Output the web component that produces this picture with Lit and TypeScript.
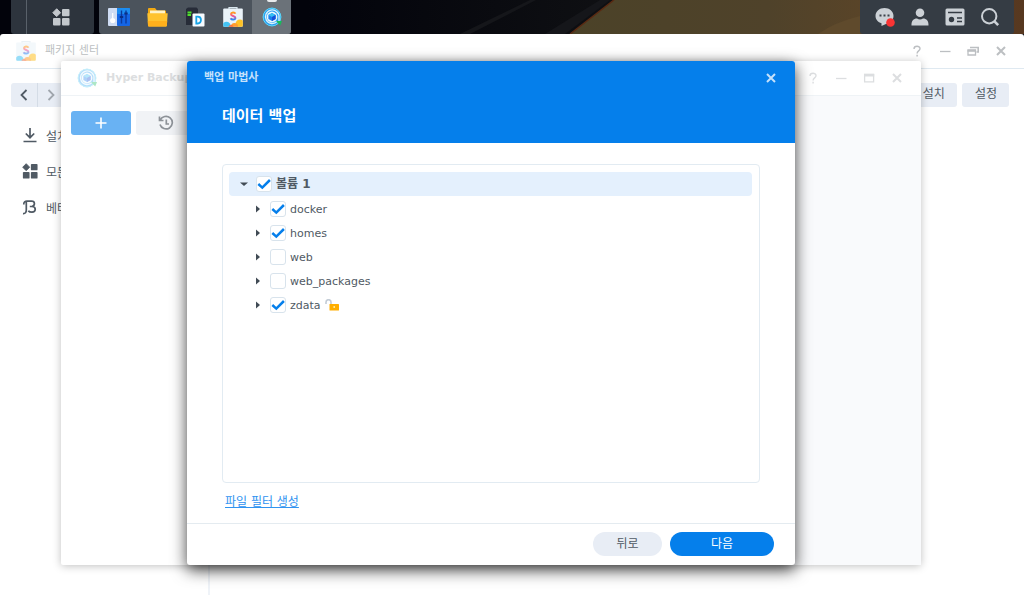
import { LitElement, html, css, svg, nothing } from "lit";
import { customElement, property, state } from "lit/decorators.js";

const backupLogo = (size: number) => html`
  <svg width=${size} height=${size} viewBox="0 0 20 20" aria-hidden="true">
    <defs>
      <linearGradient id="ring" x1="0" y1="0" x2="1" y2="1">
        <stop offset="0" stop-color="#2fc4f5" />
        <stop offset=".55" stop-color="#1f8df0" />
        <stop offset="1" stop-color="#14c46c" />
      </linearGradient>
    </defs>
    <circle cx="10" cy="10" r="9.2" fill="#2a9cf2" />
    <circle cx="10" cy="10" r="8.9" fill="none" stroke="#5fd8f5" stroke-width="1" />
    <path d="M15.300 14.300A6.800 6.800 0 1 1 17 10.500v4" fill="none" stroke="#d9f4fd" stroke-width="1.300" />
    <path d="M14 14h6l-1.800 4.500z" fill="#17bb5c" />
    <circle cx="10" cy="10" r="5.400" fill="#e9f8fe" />
    <path d="M10 6l3.600 2v4.100L10 14.100l-3.600-2V8z" fill="#1b7ff0" />
    <path d="M10 6l3.600 2L10 10 6.400 8z" fill="#36c0f2" />
    <path d="M10 10l3.600-2v4.100l-3.600 2z" fill="#1550d8" />
  </svg>
`;

const storeLogo = (size: number) => html`
  <svg width=${size} height=${size} viewBox="0 0 20 20" aria-hidden="true">
    <defs>
      <linearGradient id="ess" x1="0" y1="0" x2="0" y2="1">
        <stop offset="0" stop-color="#ffa01c" />
        <stop offset=".5" stop-color="#f5509b" />
        <stop offset="1" stop-color="#2a8df5" />
      </linearGradient>
      <clipPath id="bag"><rect x=".2" y="1.500" width="19.600" height="18.300" rx="1" /></clipPath>
    </defs>
    <path d="M6 2V.6h8V2" fill="none" stroke="#d9e6ee" stroke-width="1.200" />
    <g clip-path="url(#bag)">
      <rect width="20" height="20" fill="#eaf3f9" />
      <circle cx="17" cy="17" r="4.500" fill="#ffc225" />
      <circle cx="11.500" cy="19.500" r="3.600" fill="#ff9d2e" />
      <circle cx="3.500" cy="19" r="4.200" fill="#43c3f3" />
      <circle cx="8" cy="20.500" r="2.600" fill="#f9693c" />
    </g>
    <path d="M12.300 6.700C11.800 5 8.200 4.900 8 7.100c-.2 2.300 4.500 1.400 4.400 3.900-.2 2.100-3.900 2.100-4.800.3" fill="none"
      stroke="url(#ess)" stroke-width="2" />
  </svg>
`;

const tiles = (size: number) => html`
  <svg width=${size} height=${size} viewBox="0 0 18 18" fill="currentColor" aria-hidden="true">
    <path d="M4.700.8L8.600 4.700 4.700 8.600.8 4.700z" stroke="currentColor" stroke-width="1" stroke-linejoin="round" />
    <rect x="10" y="1" width="7.500" height="7.200" rx="1" />
    <rect x="1" y="10" width="7.500" height="7.500" rx="1" />
    <rect x="10" y="10" width="7.500" height="7.500" rx="1" />
  </svg>
`;

const windowGlyphs: Record<string, unknown> = {
  help: svg`<path d="M3 3.900C3.100.400 9 .500 9 3.700c0 2.100-2.900 2.300-2.900 4.700M6.100 9.800v1.700" stroke-width="1.400" />`,
  minimize: svg`<path d="M1 6.500h10.500" stroke-width="1.300" />`,
  maximize: svg`<path d="M1.600 2.500h9v7.400h-9z" stroke-width="1.300" /><path d="M1 3.200h10.200" stroke-width="2.600" />`,
  restore: svg`<path d="M1 5h7.500v5H1z" stroke-width="1.300" /><path d="M.5 5.800H9" stroke-width="2" /><path d="M3 2.500h8.200v4.500H9.500" stroke-width="1.600" />`,
  close: svg`<path d="M2 2l8 8M10 2l-8 8" stroke-width="2" />`,
};

@customElement("window-tools")
export class WindowTools extends LitElement {
  static styles = css`
    :host { display: flex; gap: 16px; }
    button {
      width: 12px; height: 12px; padding: 0; border: 0;
      background: none; color: inherit; display: grid;
    }
    svg { width: 12px; height: 12px; fill: none; stroke: currentColor; }
  `;
  @property({ attribute: false }) names: string[] = [];
  render() {
    return this.names.map(
      (n) => html`<button aria-label=${n}><svg viewBox="0 0 12 12">${windowGlyphs[n]}</svg></button>`
    );
  }
}

interface Folder { name: string; checked: boolean; unlocked?: boolean }

@customElement("folder-tree")
export class FolderTree extends LitElement {
  static styles = css`
    :host {
      display: block; box-sizing: border-box; padding: 7px 7px 7px 6px;
      border: 1px solid #e2ebf2; border-radius: 4px; overflow: auto;
    }
    ul { list-style: none; margin: 0; padding: 0; }
    .children { padding-top: 1px; }
    .row {
      display: flex; align-items: center; height: 24px; padding-left: 10px;
      border-radius: 4px; font-size: 11px; color: #505a64;
    }
    .children .row { padding-left: 24px; }
    .root { background: #e4f0fd; font-size: 12px; font-weight: bold; }
    .root label { line-height: 18px; padding-bottom: 1px; }
    .toggle {
      width: 10px; height: 10px; padding: 0; border: 0; margin-right: 7px;
      background: none; color: #414b55; display: grid;
    }
    .toggle svg { width: 10px; height: 10px; }
    input {
      appearance: none; width: 16px; height: 16px; margin: 0 4px 0 0; box-sizing: border-box;
      border: 1px solid #d8e3ec; border-radius: 3px; background: #fff center / 14px no-repeat;
    }
    input:checked {
      background-image: url("data:image/svg+xml,%3Csvg xmlns='http://www.w3.org/2000/svg' viewBox='0 0 14 14'%3E%3Cpath d='M1.300 7l4 3.600L12.900 3' fill='none' stroke='%23057feb' stroke-width='2.500'/%3E%3C/svg%3E");
    }
    .lock { width: 14px; height: 12px; margin-left: 4px; }
  `;
  @state() private folders: Folder[] = [
    { name: "docker", checked: true },
    { name: "homes", checked: true },
    { name: "web", checked: false },
    { name: "web_packages", checked: false },
    { name: "zdata", checked: true, unlocked: true },
  ];
  render() {
    return html`
      <ul>
        <li>
          <div class="row root">
            <button class="toggle" aria-label="접기">
              <svg viewBox="0 0 10 10"><path d="M1 3.500h8L5 7z" fill="currentColor" /></svg>
            </button>
            <input type="checkbox" id="volume" checked /><label for="volume">볼륨 1</label>
          </div>
          <ul class="children">
            ${this.folders.map(
              (f) => html`<li class="row">
                <button class="toggle" aria-label="펼치기">
                  <svg viewBox="0 0 10 10"><path d="M3 1.500v7L7 5z" fill="currentColor" /></svg>
                </button>
                <input type="checkbox" id=${f.name} .checked=${f.checked} />
                <label for=${f.name}>${f.name}</label>
                ${f.unlocked
                  ? html`<svg class="lock" viewBox="0 0 14 12" aria-hidden="true">
                      <path d="M1 5V3.200a2.500 2.500 0 0 1 5 0V6" fill="none" stroke="#c3ccd6" stroke-width="1.600" />
                      <rect x="4.500" y="5" width="9.500" height="6.500" rx=".6" fill="#ffae00" />
                      <circle cx="9.200" cy="8" r=".9" fill="#fff0b0" />
                    </svg>`
                  : nothing}
              </li>`
            )}
          </ul>
        </li>
      </ul>
    `;
  }
}

@customElement("backup-wizard")
export class BackupWizard extends LitElement {
  static styles = css`
    :host {
      display: flex; flex-direction: column; background: #fff;
      border-radius: 3px; box-shadow: 0 5px 16px rgba(0, 0, 0, 0.75);
    }
    header {
      box-sizing: border-box; height: 82px; padding: 0 18px 0 17px; background: #057feb;
      border-radius: 3px 3px 0 0; color: #fff;
    }
    .bar {
      display: flex; align-items: center; justify-content: space-between;
      height: 34px; color: #c5e1fb; font-size: 11px;
    }
    h2 { font-size: 11px; line-height: 18px; margin: 0; }
    h1 { font-size: 15px; line-height: 20px; margin: 11px 18px 0; }
    main { flex: 1; display: flex; flex-direction: column; padding: 21px 35px 11px; min-height: 0; }
    folder-tree { flex: 1; }
    a { align-self: flex-start; margin: 9px 3px 0; color: #2f93f0; font-size: 12px; line-height: 20px; }
    footer {
      display: flex; align-items: center; justify-content: flex-end; gap: 8px;
      height: 39px; padding: 0 21px 2px; border-top: 1px solid #e4ebf0;
    }
    footer button {
      height: 24px; padding: 0; border: 0; border-radius: 12px; font: inherit; font-size: 12px;
      line-height: 18px;
      min-width: 69px; background: #e8edf5; color: #505a64;
    }
    footer .primary { min-width: 104px; background: #057feb; color: #fff; }
  `;
  render() {
    return html`
      <header>
        <div class="bar"><h2>백업 마법사</h2><window-tools .names=${["close"]}></window-tools></div>
        <h1>데이터 백업</h1>
      </header>
      <main>
        <folder-tree></folder-tree>
        <a href="#">파일 필터 생성</a>
      </main>
      <footer><button>뒤로</button><button class="primary">다음</button></footer>
    `;
  }
}

@customElement("task-bar")
export class TaskBar extends LitElement {
  static styles = css`
    :host { position: relative; display: flex; height: 34px; background: #02030b; }
    .wallpaper { position: absolute; inset: 0; width: 100%; height: 100%; }
    nav { position: relative; display: flex; flex: 1; padding: 0 10px 0 11px; }
    button { padding: 0; border: 0; background: none; color: #c3c8cd; display: grid; place-items: center; }
    .menu { display: flex; background: #2d343d; border-radius: 0 0 3px 3px; width: 83px; margin-right: 5px; }
    .menu button { flex: 1; }
    .peek { width: 15px; border-right: 1px solid #59616a; }
    .apps { display: flex; background: #4b535c; border-radius: 0 0 3px 3px; overflow: hidden; }
    .apps button { width: 38px; }
    .apps .active { width: 39px; background: #6b7279; position: relative; }
    .active::before {
      content: ""; position: absolute; top: 0; left: 15px; width: 10px; height: 2px;
      background: #e8eaec; border-radius: 0 0 2px 2px;
    }
    .apps button:first-child { width: 39px; }
    .tray {
      display: flex; margin-left: auto; padding: 0 7px; background: #353c44; border-radius: 0 0 3px 3px;
    }
    .tray button { width: 35px; }
  `;
  render() {
    return html`
      <svg class="wallpaper" viewBox="0 0 1024 34" preserveAspectRatio="none" aria-hidden="true">
        <defs>
          <linearGradient id="night"><stop offset=".3" stop-color="#02030b" /><stop offset=".6" stop-color="#0f1013" /></linearGradient>
          <linearGradient id="dune" x1="560" x2="1024" y1="0" y2="0" gradientUnits="userSpaceOnUse">
            <stop offset="0" stop-color="#4b4228" /><stop offset=".45" stop-color="#4f422a" />
            <stop offset=".65" stop-color="#594428" /><stop offset="1" stop-color="#573820" />
          </linearGradient>
        </defs>
        <rect width="1024" height="34" fill="url(#night)" />
        <path d="M460 34L530 0h6L470 34zM545 34L600 0h10L565 34z" fill="#15161a" />
        <path d="M570 34L614 0h410v34z" fill="url(#dune)" />
        <path d="M570 34L614 0" stroke="#5a2a12" stroke-width="1.500" />
        <path d="M818 34Q835 22 860 16v18z" fill="#5f4a2c" />
      </svg>
      <nav>
        <div class="menu"><span class="peek"></span><button aria-label="메인 메뉴">${tiles(18)}</button></div>
        <div class="apps">
          <button aria-label="제어판">
            <svg width="22" height="20" viewBox="0 0 22 20">
              <rect y="1" width="10" height="18" rx="1" fill="#cfdcf3" /><rect x="9" y="1" width="13" height="18" rx="1" fill="#1565e4" />
              <rect x="9" y="1" width="13" height="6" rx="1" fill="#1c8cf0" />
              <path d="M13.500 3.500v13M18 3.500v13" stroke="#0b3a9c" stroke-width="1.400" />
              <path d="M11.800 10h3.400M16.300 6.500h3.400" stroke="#0a2f85" stroke-width="2" />
              <path d="M4.700 6v6" stroke="#fff" stroke-width="1.200" /><circle cx="4.700" cy="13.500" r="2.600" fill="#fff" />
            </svg>
          </button>
          <button aria-label="File Station">
            <svg width="21" height="20" viewBox="0 0 21 20">
              <path d="M1 2a1 1 0 0 1 1-1h6l2 2.500h8a1 1 0 0 1 1 1V18H1z" fill="#f2a912" />
              <path d="M3 3.500h15v4H3z" fill="#fff3c8" />
              <path d="M.3 6.200h20.400l-.8 12.300a1 1 0 0 1-1 1H2a1 1 0 0 1-1-1z" fill="#ffc32f" />
              <path d="M.8 14h19.400l-.4 4.500a1 1 0 0 1-1 1H2a1 1 0 0 1-1-1z" fill="#ffb01c" />
            </svg>
          </button>
          <button aria-label="DSM">
            <svg width="20" height="20" viewBox="0 0 20 20">
              <path d="M1 2l2-1.500h8.500L13 2v16H1z" fill="#272c38" />
              <path d="M2.500 5.500h4M2.500 8h3.500" stroke="#4fe02c" stroke-width="1.800" />
              <rect x="7.500" y="6.500" width="12" height="13" rx="1" fill="#f7fbff" />
              <path d="M11.300 9.700h1.500c4.200 0 4.200 6.800 0 6.800h-1.500z" fill="none" stroke="#17a3e6" stroke-width="1.800" />
            </svg>
          </button>
          <button aria-label="패키지 센터">${storeLogo(20)}</button>
          <button class="active" aria-label="Hyper Backup">${backupLogo(20)}</button>
        </div>
        <div class="tray">
          <button aria-label="알림">
            <svg width="20" height="20" viewBox="0 0 20 20">
              <path d="M9.500 1C14.500 1 18.500 4.400 18.500 9s-4 7.500-7 7.800L6.500 19v-2.700C3 15.300.500 12.500.500 9 .500 4.400 4.500 1 9.500 1z" fill="#ccd1d6" />
              <path d="M4.500 7.500h2v2h-2zM8.500 7.500h2v2h-2zM12.500 7.500h2v2h-2z" fill="#3b424a" />
              <circle cx="15.500" cy="15.500" r="4.300" fill="#fa3434" />
            </svg>
          </button>
          <button aria-label="사용자">
            <svg width="18" height="18" viewBox="0 0 18 18" fill="#ccd1d6">
              <circle cx="9" cy="4.800" r="4.300" /><path d="M.5 17.500c-.3-4.500 2-7 5.500-7 2 1.300 4 1.300 6 0 3.500 0 5.800 2.500 5.500 7z" />
            </svg>
          </button>
          <button aria-label="위젯">
            <svg width="20" height="18" viewBox="0 0 20 18">
              <rect x=".5" y=".5" width="19" height="17" rx="1.500" fill="#ccd1d6" />
              <path d="M3 4.500h14M12 10h5M12 13.500h5" stroke="#353c44" stroke-width="1.600" /><circle cx="6.500" cy="11.500" r="2.700" fill="#353c44" />
            </svg>
          </button>
          <button aria-label="검색">
            <svg width="20" height="20" viewBox="0 0 20 20" fill="none" stroke="#ccd1d6" stroke-width="2">
              <circle cx="9.200" cy="9.200" r="7.200" /><path d="M14.200 14.200l4 4" stroke-width="2.600" />
            </svg>
          </button>
        </div>
      </nav>
    `;
  }
}

@customElement("app-root")
export class AppRoot extends LitElement {
  static styles = css`
    :host {
      position: relative; display: flex; flex-direction: column; min-height: 100vh; overflow: hidden;
      background: #02030b; color: #505a64;
      font-family: "DejaVu Sans", "Noto Sans CJK KR", sans-serif; font-size: 12px;
    }
    button { border: 0; padding: 0; font: inherit; color: inherit; display: grid; place-items: center; }
    .store { flex: 1; display: flex; flex-direction: column; background: #fff; border-radius: 3px 3px 0 0; }
    .title { display: flex; align-items: center; gap: 9px; height: 35px; font-size: 11px; box-sizing: border-box; }
    .title span { line-height: 18px; padding-bottom: 1px; }
    .title window-tools { margin-left: auto; }
    .store > .title { padding: 0 17px 0 16px; border-bottom: 1px solid #dfe9f1; color: #bcbfc2; }
    .title > svg { opacity: 0.55; }
    .toolbar { display: flex; height: 24px; padding: 14px 15px 14px 11px; }
    .toolbar button { background: #e8edf5; line-height: 18px; }
    .nav { width: 26px; }
    .back { border-radius: 3px 0 0 3px; }
    .forward { border-left: 1px solid #d4dce6; color: #a0a6ad; border-radius: 0 3px 3px 0; }
    .actions { display: flex; gap: 5px; margin-left: auto; }
    .actions button { padding: 0 12px 2px 13px; border-radius: 3px; }
    .sections {
      flex: 1; box-sizing: border-box; width: 210px; margin: -4px 0 0; padding: 0 0 0 22px;
      list-style: none; border-right: 2px solid #eff3f8;
    }
    .sections a { display: flex; align-items: center; gap: 8px; height: 36px; color: inherit; text-decoration: none; }
    .backup {
      position: absolute; inset: 61px 103px 30px 61px; display: flex; flex-direction: column;
      background: #fff; box-shadow: 0 1px 8px rgba(0, 0, 0, 0.25); border-radius: 2px;
    }
    .backup > .title {
      padding: 0 18px 0 16px; border-bottom: 1px solid #eff3f6; color: #dcdee0; font-weight: bold;
    }
    .backup > .title > svg { opacity: 0.35; }
    .panes { flex: 1; display: flex; }
    .tasks { display: flex; gap: 5px; width: 240px; padding: 15px 10px; box-sizing: border-box; }
    .tasks button { width: 60px; height: 24px; border-radius: 3px; background: #f1f3f6; color: #8d9298; }
    .tasks .add { background: #69b2f3; color: #fff; }
    .detail { flex: 1; background: #f9fafc; }
    backup-wizard { position: absolute; top: 0; bottom: 0; left: 126px; right: 126px; }
  `;
  render() {
    return html`
      <task-bar></task-bar>
      <section class="store">
        <div class="title">
          ${storeLogo(20)}<span>패키지 센터</span>
          <window-tools .names=${["help", "minimize", "restore", "close"]}></window-tools>
        </div>
        <div class="toolbar">
          <button class="nav back" aria-label="뒤로">
            <svg width="12" height="12" viewBox="0 0 12 12" fill="none" stroke="currentColor" stroke-width="1.800"><path d="M8.500 1L3.500 6l5 5" /></svg>
          </button>
          <button class="nav forward" aria-label="앞으로">
            <svg width="12" height="12" viewBox="0 0 12 12" fill="none" stroke="currentColor" stroke-width="1.800"><path d="M3.500 1l5 5-5 5" /></svg>
          </button>
          <div class="actions"><button>수동 설치</button><button>설정</button></div>
        </div>
        <ul class="sections">
          <li><a href="#">
            <svg width="16" height="16" viewBox="0 0 16 16" fill="none" stroke="currentColor" stroke-width="1.700"><path d="M8 1v9.500M3.800 6.500L8 10.700l4.200-4.200M1.500 14.500h13" /></svg>설치됨</a></li>
          <li><a href="#">${tiles(16)}모든 패키지</a></li>
          <li><a href="#">
            <svg width="16" height="16" viewBox="0 0 16 16" fill="none" stroke="currentColor" stroke-width="1.700"><path d="M1 14.600c2.200.200 3.300-1.200 3.300-3.600V2.300M1.800 5.500C1.500 3 3.200 2.200 5 2.200h4.500c3.800 0 3.800 4.300.5 5.300H7.800 10c4.300 0 4.300 5.700 0 5.700-1.800 0-3-.4-3.700-1.500" /></svg>베타 패키지</a></li>
        </ul>
      </section>
      <section class="backup">
        <div class="title">
          ${backupLogo(20)}<span>Hyper Backup</span>
          <window-tools .names=${["help", "minimize", "maximize", "close"]}></window-tools>
        </div>
        <div class="panes">
          <div class="tasks">
            <button class="add" aria-label="추가">
              <svg width="12" height="12" viewBox="0 0 12 12" stroke="currentColor" stroke-width="1.600"><path d="M6 .5v11M.5 6h11" /></svg>
            </button>
            <button aria-label="복원">
              <svg width="16" height="16" viewBox="0 0 16 16" fill="none" stroke="currentColor" stroke-width="1.700"><path d="M2.300 5A6.300 6.300 0 1 1 2 9.500M1.500 1.500v4h4M8.300 4.500V9H11" /></svg>
            </button>
          </div>
          <div class="detail"></div>
        </div>
        <backup-wizard></backup-wizard>
      </section>
    `;
  }
}
